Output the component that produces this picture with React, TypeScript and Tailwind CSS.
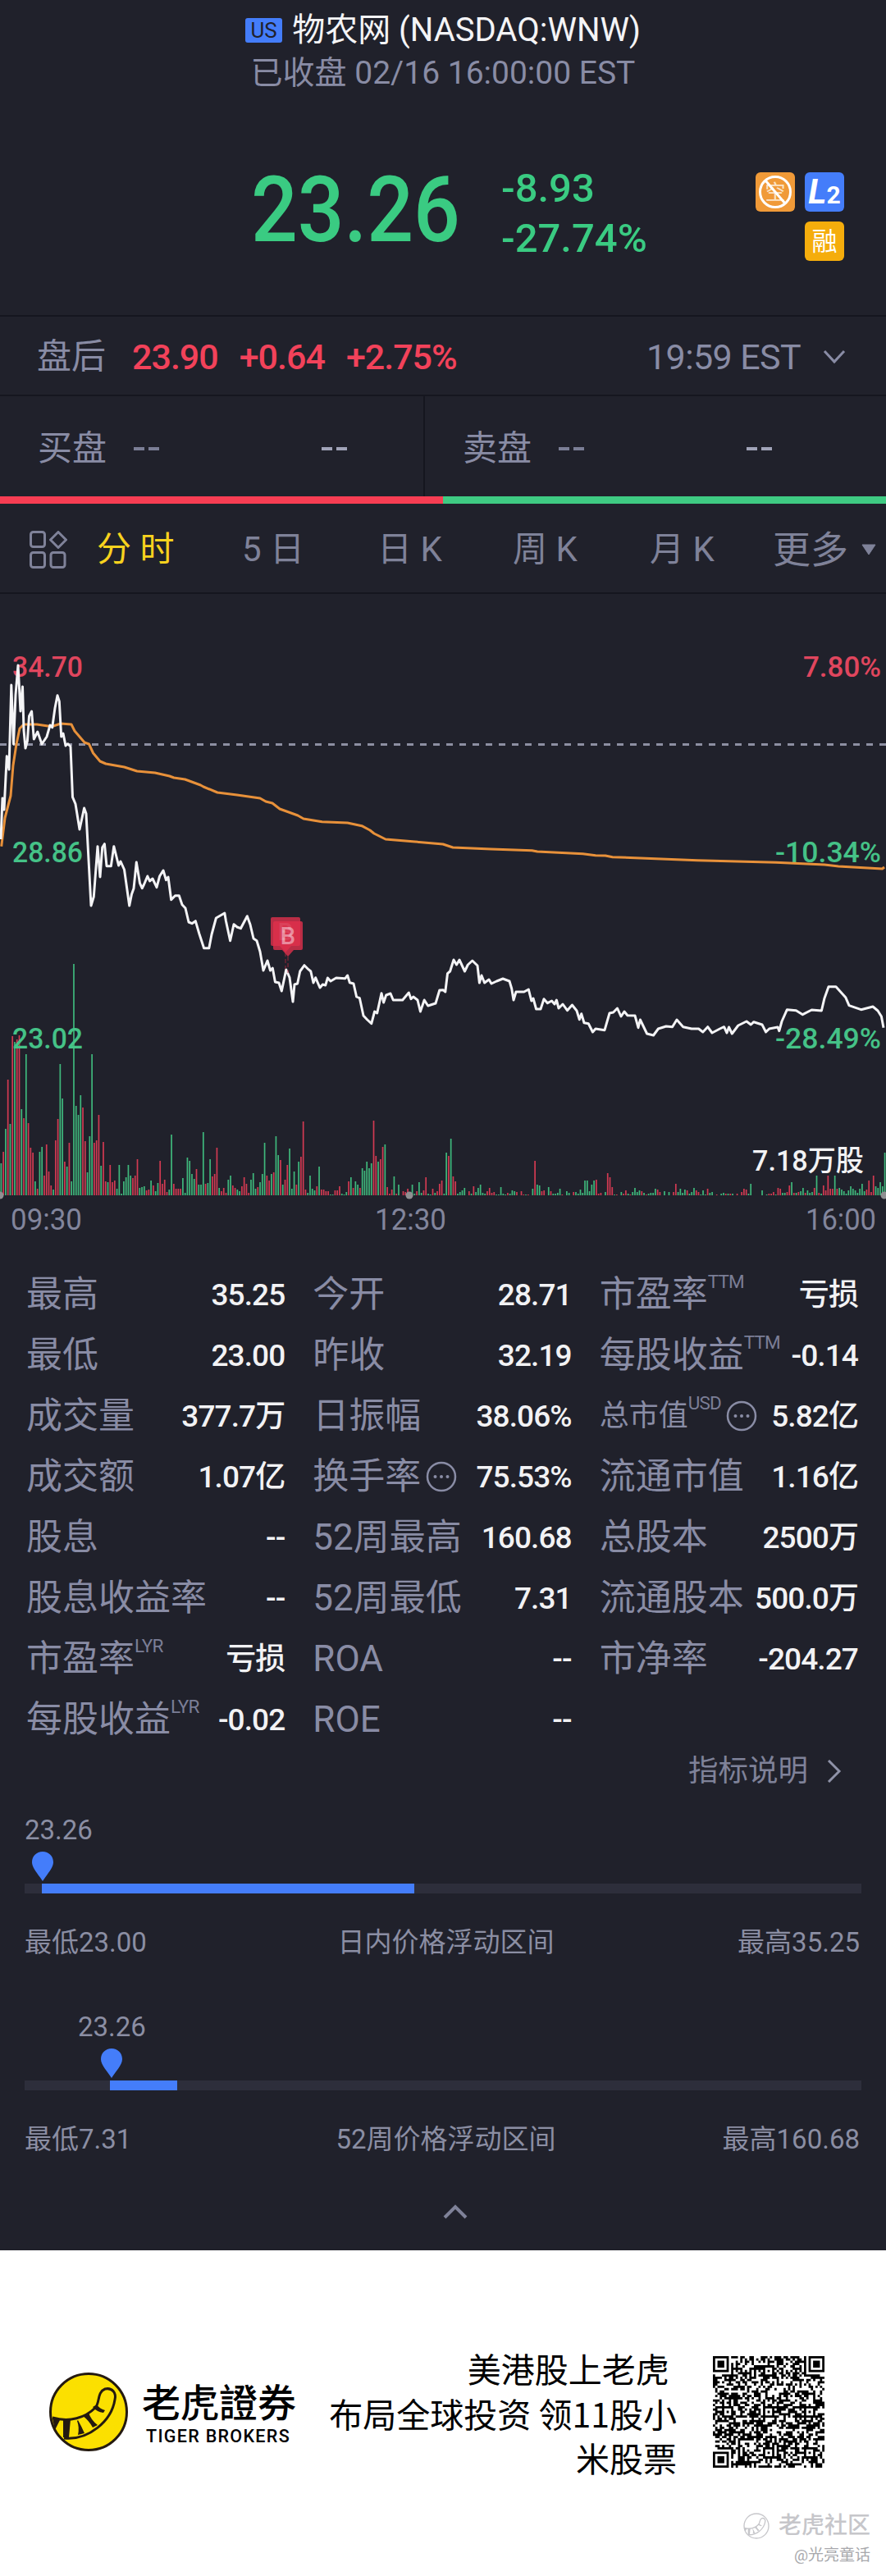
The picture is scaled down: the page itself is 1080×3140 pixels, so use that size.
import React from "react";

const AVERAGE_LINE =
  "1.7,1031.7 6,997 13,970 16,933 20,907 24,888 29,883 45,883 58.5,885 65,885 74,882 87,883 91,891 103,905 108.5,907 113.6,918 122,928 129,931 151.5,935 167,940 189,942 206.6,946 212,948 225.5,950 244.5,957 248,959 265,966 289,969 317,973 324,977 332,979 341,986 363,994 370,998 392.6,1001.7 423.6,1003 441,1006.7 451,1012 456,1016 470,1023 506,1026 540,1029 552,1033 598.5,1035 648.5,1036.7 655,1038 710.5,1040.7 726,1042.7 738,1043 746.6,1044.7 850,1048.7 946,1051.3 1005,1054 1022,1056 1075.5,1059 1078,1057";

const PRICE_LINE =
  "1,1023 3,973 5,987 7,947 8.3,921.7 11,938 13.8,835 16.5,907 19,847 22,811 25,867 27.5,837 29,890 31,912 33.4,903 35.5,873 38.6,867 41.3,901 45.8,892 51,907 57,898 61,884 63.7,886.7 67,863 70,847.7 72.3,855 74.7,898 77,894 80,909 82.6,906.7 86,910 88.5,971.7 92,980 97,1011 102.6,985 105,991.7 111,1104 114.3,1093 119,1031.7 122,1069 124.7,1033 127.4,1028.7 130,1055.7 135.3,1055.7 138.8,1031.7 144.6,1055 147,1050 151.5,1060 157.7,1104 160.5,1090 163,1083 166.3,1051 170.5,1076.7 173.2,1082.7 175.6,1078 179.8,1068 182.5,1074 186,1071 191,1081.7 194.6,1068 199,1061 202.5,1072.7 205,1069 208.7,1096.7 213.5,1091.7 218.3,1091.7 222,1102.7 226,1107 230,1124 234,1125.7 238.3,1122.7 242.8,1138 248.6,1155.7 254.8,1155.7 258,1139 263.4,1119 273.8,1113 275.5,1123 280.6,1146.7 285,1126.7 289,1130 293.4,1131.7 301.3,1116.7 305,1127 309,1144 313,1146.7 317,1160 321,1183 326,1171 329.5,1183 332.3,1180 335.4,1197 340,1198 343.3,1208 348.8,1182 353,1191.7 357,1221 359,1200 362.6,1199 365.7,1184 371,1176.7 376,1181.7 378.8,1184 382,1198 384.6,1191.7 390,1204 393.3,1200 396.7,1201 399.4,1192 403,1196 409.8,1192 420.8,1192.7 423.6,1189 426.3,1197.7 431,1199 434.6,1215 438.4,1216.7 443,1238 447.7,1243 452.8,1247.7 456.6,1233 459.7,1235 465,1210.7 467.6,1222 470.7,1213 476,1211 479.3,1219 490.7,1219 498.3,1210 501,1217.7 503.8,1215 509,1219 512.4,1233 517.2,1219 521.7,1226 531,1223 535.8,1207 540,1206.7 542.8,1209 545.5,1186.7 548.6,1184 553,1170 556.5,1176 560,1170 566.5,1184 570.3,1176 575.8,1171 582,1177 584.4,1198 587,1189 590.6,1198 596,1194 599,1199 605.4,1196 613,1193 621,1196 623.7,1205 626,1219 629,1209 638.8,1209 644.3,1206 647.8,1220 650,1217 653.6,1230 659,1230 663,1217.7 667.4,1222.7 672.6,1220 676,1224 678.4,1219 681,1229 686,1224 691.5,1231.7 697.4,1225 703,1232 706.3,1242.7 708.7,1235.7 712,1246.7 717.3,1247.7 722.5,1258 726,1254 737,1255.7 743,1235 747.6,1234 752.5,1229 757,1239 761,1233 764.9,1237.7 774,1238 778,1252.7 780.4,1243 788.6,1260 796.5,1262 802.4,1254 812,1251 819.6,1251.7 825,1243 832.7,1251.7 843,1254 851.6,1254 856.8,1258 862.7,1251.7 868,1259 877.5,1254 882.6,1251.7 886,1259 888.5,1252 892.3,1260 899.8,1250 910,1245 915.3,1249 918.8,1245.7 929,1249 933.6,1258 937.7,1254 948,1252 949.8,1256.7 953,1245 959.4,1230.7 970.4,1231.7 978.4,1236.7 989.4,1231 1001.4,1232 1005,1216.7 1010,1202.7 1019,1202.7 1030.7,1215.7 1035,1225.7 1049.6,1230.7 1064,1227 1070,1232 1074.4,1239 1077,1252.7";

// one entry per minute, r = up, g = down
const VOLUMES =
  "g39 r53 g81 r141 g87 r194 g187 r190 r195 g105 r94 g172 r88 r58 r52 g17 r8 g53 g59 r24 r62 r29 r12 g7 r67 r93 g160 g118 r41 g35 r64 g17 g282 g109 g98 g122 r107 r66 g28 g72 g172 r64 r67 r98 g36 r65 r17 g16 r37 r16 r18 g8 g37 g2 g17 g22 g37 g24 r21 r24 r44 g9 g10 g11 r6 r7 g18 r12 g5 g15 r42 r14 r19 r4 g7 g74 r14 r8 r8 r8 g21 g3 g46 g42 g26 g20 r32 g13 g13 g77 r14 g15 g44 r23 r26 r58 g9 r5 r9 r3 g19 g24 r12 r9 g7 g5 r11 r22 r14 r3 g19 g27 g8 r10 g16 g26 g64 r24 r18 g26 r28 g72 g49 r43 g13 r19 r37 g57 g8 g29 r13 g41 r47 r90 r7 g3 g24 g8 g6 r11 g35 r7 r7 r5 r5 g1 g1 r6 r6 r11 g2 g1 g4 r17 g22 r9 g17 g13 r9 g33 g30 g41 g33 g39 r91 r48 g41 r44 r59 g62 r10 r2 r7 g23 r2 g13 g0 r5 r4 r8 r3 g13 g2 r5 g16 g3 r6 r22 g2 g1 r8 g3 r5 r14 r18 g2 g52 r48 g69 r23 r17 g2 g4 g6 g9 g0 r5 g2 r11 g4 g9 g13 g3 g2 r5 r9 r3 r4 g1 g1 g10 g2 g1 r3 g2 g6 g5 r4 g0 r5 r1 g1 r1 g0 g8 r42 g13 g12 r5 r6 g0 g10 r5 g2 g2 g3 g8 r1 g0 g5 g3 g0 r4 g4 g2 g7 g3 g18 g18 g5 g13 g18 r19 r2 r3 g0 g4 r27 r22 r10 g1 r1 g0 g4 r2 r6 g2 r1 g4 g9 g4 g6 r5 g3 r1 g2 g3 g3 g8 r7 r4 g0 g5 g0 g4 g0 r4 r14 g4 g8 g3 g7 r6 g2 g4 g9 r6 r4 g1 g6 g1 r8 g3 g4 g0 r1 g0 g2 g3 r2 g2 r2 g2 g0 r2 g0 r4 r8 r7 g2 g14 g0 g0 g0 g0 g6 g0 g1 r2 r2 r4 g1 r9 r8 g3 g3 r4 r12 g16 r3 g3 r4 g5 g9 r3 g6 g3 g4 r9 g24 r3 g2 r12 r6 r24 r8 r8 g24 r8 g9 g7 g5 g2 g6 g11 g8 g6 g3 g8 g14 g5 r7 r18 r4 r24 g11 g9 g16 g11 g52".split(
    " "
  );

const TABS = [
  { label: "分 时", className: "w-[177px] text-[#f7d21e]" },
  { label: "5 日", className: "w-[165px]" },
  { label: "日 K", className: "w-[165px]" },
  { label: "周 K", className: "w-[167px]" },
  { label: "月 K", className: "w-[150px]" },
];

type Stat = {
  label: string;
  value: string;
  sup?: string;
  info?: boolean;
  small?: boolean;
};

const STATS: (Stat | null)[] = [
  { label: "最高", value: "35.25" },
  { label: "今开", value: "28.71" },
  { label: "市盈率", sup: "TTM", value: "亏损" },
  { label: "最低", value: "23.00" },
  { label: "昨收", value: "32.19" },
  { label: "每股收益", sup: "TTM", value: "-0.14" },
  { label: "成交量", value: "377.7万" },
  { label: "日振幅", value: "38.06%" },
  { label: "总市值", sup: "USD", info: true, small: true, value: "5.82亿" },
  { label: "成交额", value: "1.07亿" },
  { label: "换手率", info: true, value: "75.53%" },
  { label: "流通市值", value: "1.16亿" },
  { label: "股息", value: "--" },
  { label: "52周最高", value: "160.68" },
  { label: "总股本", value: "2500万" },
  { label: "股息收益率", value: "--" },
  { label: "52周最低", value: "7.31" },
  { label: "流通股本", value: "500.0万" },
  { label: "市盈率", sup: "LYR", value: "亏损" },
  { label: "ROA", value: "--" },
  { label: "市净率", value: "-204.27" },
  { label: "每股收益", sup: "LYR", value: "-0.02" },
  { label: "ROE", value: "--" },
  null,
];

function Header() {
  return (
    <div className="h-[384px] pt-[10px]">
      <div className="flex h-[53px] items-center justify-center text-[40px] leading-none text-[#f4f4f6]">
        <span className="mr-[12px] flex h-[30px] w-[45px] items-center justify-center rounded-[3px] bg-[#447dfa] text-[26px] text-[#20212c]">
          US
        </span>
        物农网 (NASDAQ:WNW)
      </div>
      <div className="flex h-[53px] items-center justify-center text-[39px] leading-none text-[#898ca5]">
        已收盘 02/16 16:00:00 EST
      </div>
      <div className="mt-[82px] flex h-[123px] pl-[306px] pr-[51px] text-[#3acb82]">
        <div className="w-[305px]">
          <div className="origin-left scale-x-90 text-[111px] font-medium leading-[117px]">
            23.26
          </div>
        </div>
        <div className="pt-[1px] text-[49px] font-medium leading-[61px]">
          <div>-8.93</div>
          <div>-27.74%</div>
        </div>
        <div className="ml-auto mt-[12px] grid h-[108px] grid-cols-2 gap-[12px] leading-none text-white">
          <div className="size-[48px] rounded-[6px] bg-[#f09a38]">
            <svg viewBox="0 0 48 48" className="size-full">
              <text x="24" y="33" textAnchor="middle" fontSize="25" fill="#fbe3c5">
                空
              </text>
              <circle cx="24" cy="24" r="18.5" fill="none" stroke="#fff" strokeWidth="3" />
              <path d="M12 10 36 38" stroke="#fff" strokeWidth="3" />
            </svg>
          </div>
          <div className="flex size-[48px] items-baseline justify-center rounded-[6px] bg-[#447dfa] pt-[2px] font-bold">
            <span className="text-[42px] italic leading-[44px]">L</span>
            <span className="text-[30px]">2</span>
          </div>
          <div className="col-start-2 flex size-[48px] items-center justify-center rounded-[6px] bg-[#f5ad0c] text-[31px]">
            融
          </div>
        </div>
      </div>
    </div>
  );
}

function AfterHours() {
  return (
    <div className="flex h-[99px] items-center border-y-2 border-[#15161f] pl-[45px] pr-[49px] pt-[3px] text-[42px] leading-none text-[#898ca5]">
      <span className="mr-[32px]">盘后</span>
      <div className="flex gap-[26px] text-[43px] font-medium tracking-[-1px] text-[#f2425a]">
        <span>23.90</span>
        <span>+0.64</span>
        <span>+2.75%</span>
      </div>
      <span className="ml-auto text-[43px] tracking-[-0.6px]">19:59 EST</span>
      <svg viewBox="0 0 28 18" className="ml-[27px] h-[18px] w-[28px]">
        <path d="M2 2 14 15 26 2" fill="none" stroke="#898ca5" strokeWidth="3" />
      </svg>
    </div>
  );
}

function Quote({ label, className }: { label: string; className: string }) {
  return (
    <div className={`flex items-center pl-[46px] pt-[5px] ${className}`}>
      <span className="w-[117px]">{label}</span>
      <span className="flex w-[229px] gap-[5px]">
        <i className="h-[4px] w-[13px] bg-[#7b7e96]" />
        <i className="h-[4px] w-[13px] bg-[#7b7e96]" />
      </span>
      <span className="flex gap-[5px]">
        <i className="h-[4px] w-[13px] bg-[#a0a3b8]" />
        <i className="h-[4px] w-[13px] bg-[#a0a3b8]" />
      </span>
    </div>
  );
}

function Tabs() {
  return (
    <div className="flex h-[110px] items-center border-b-2 border-[#15161f] pl-[36px] pt-[3px] text-[42px] leading-none text-[#7f8299]">
      <svg
        viewBox="0 0 46 46"
        className="mr-[36px] size-[46px]"
        fill="none"
        stroke="#7f8299"
        strokeWidth="3"
      >
        <rect x="1.5" y="1.5" width="17" height="18" rx="3" />
        <rect x="1.5" y="26.5" width="17" height="18" rx="3" />
        <rect x="26" y="26.5" width="17" height="18" rx="3" />
        <path d="M35 1.5 44.5 11 35 20.5 25.5 11Z" strokeLinejoin="round" />
      </svg>
      {TABS.map((tab) => (
        <span key={tab.label} className={tab.className}>
          {tab.label}
        </span>
      ))}
      <span className="text-[46px]">更多</span>
      <svg viewBox="0 0 18 14" className="ml-[16px] h-[14px] w-[18px]">
        <path d="M1 1H17L9 13Z" fill="#7f8299" stroke="#7f8299" strokeLinejoin="round" />
      </svg>
    </div>
  );
}

function Marker({ x, y }: { x: number; y: number }) {
  return (
    <g opacity="0.8">
      <path
        d={`M${x + 2} ${y}h32a2 2 0 0 1 2 2v31a2 2 0 0 1-2 2h-9l-7 8-7-8h-9a2 2 0 0 1-2-2v-31a2 2 0 0 1 2-2z`}
        fill="#e0304c"
      />
      <text x={x + 18} y={y + 28} textAnchor="middle" fontSize="29" fontWeight="500" fill="#f5a3b3">
        B
      </text>
      <path d={`M${x + 18} ${y + 43}v20`} stroke="#b3283e" strokeDasharray="5 3" />
    </g>
  );
}

type LabelProps = { x: number; y: number; width: number; fill?: string; children: string };

function ChartLabel({ x, y, width, fill, children }: LabelProps) {
  return (
    <text x={x} y={y} textLength={width} lengthAdjust="spacingAndGlyphs" fill={fill}>
      {children}
    </text>
  );
}

function Chart() {
  const step = 1080 / 390;
  return (
    <svg viewBox="0 724 1080 796" className="block h-[796px] w-full">
      {VOLUMES.map((item, i) => {
        const h = Number(item.slice(1));
        return (
          <rect
            key={i}
            x={i * step + 0.5}
            y={1457 - h}
            width="1.7"
            height={h}
            fill={item[0] === "r" ? "#d23a52" : "#3fb87c"}
          />
        );
      })}
      <path d="M0 907.5H1080" stroke="#8d8fa2" strokeWidth="3" strokeDasharray="8 8" />
      <g fill="#8f9092">
        <circle cx="0" cy="1457" r="4.5" />
        <circle cx="499" cy="1457" r="4.5" />
        <circle cx="1078" cy="1457" r="4.5" />
      </g>
      <g fontSize="35" fontWeight="500" fill="#45c287">
        <ChartLabel x={15} y={825} width={86} fill="#e0465e">34.70</ChartLabel>
        <ChartLabel x={15} y={1051} width={86}>28.86</ChartLabel>
        <ChartLabel x={15} y={1278} width={86}>23.02</ChartLabel>
        <ChartLabel x={979} y={825} width={95} fill="#e0465e">7.80%</ChartLabel>
        <ChartLabel x={945} y={1051} width={129}>-10.34%</ChartLabel>
        <ChartLabel x={945} y={1278} width={129}>-28.49%</ChartLabel>
        <ChartLabel x={917} y={1427} width={136} fill="#f2f2f4">7.18万股</ChartLabel>
      </g>
      <g fontSize="36" fill="#82859c">
        <ChartLabel x={13} y={1499} width={87}>09:30</ChartLabel>
        <ChartLabel x={457} y={1499} width={87}>12:30</ChartLabel>
        <ChartLabel x={982} y={1499} width={86}>16:00</ChartLabel>
      </g>
      <g fill="none" strokeWidth="3" strokeLinejoin="round">
        <polyline points={AVERAGE_LINE} stroke="#e8913a" />
        <polyline points={PRICE_LINE} stroke="#f4f4f6" />
      </g>
      <Marker x={330} y={1118} />
      <Marker x={333} y={1123} />
    </svg>
  );
}

function InfoIcon() {
  return (
    <svg viewBox="0 0 38 38" className="ml-[6px] size-[38px]" fill="#898ca5">
      <circle cx="19" cy="19" r="17" fill="none" stroke="#898ca5" strokeWidth="2.5" />
      <circle cx="11.5" cy="19" r="2" />
      <circle cx="19" cy="19" r="2" />
      <circle cx="26.5" cy="19" r="2" />
    </svg>
  );
}

function Stats() {
  return (
    <div className="grid grid-cols-3 gap-x-[34px] pl-[32px] pr-[34px] pt-[21px] leading-none">
      {STATS.map((stat, i) =>
        stat ? (
          <div key={i} className="flex h-[74px] items-center justify-between whitespace-nowrap">
            <div
              className={`flex items-center text-[#898ca5] ${
                stat.small ? "text-[36px]" : "text-[44px]"
              }`}
            >
              {stat.label}
              {stat.sup && (
                <span className="mb-[32px] text-[22.5px] tracking-[-0.8px] text-[#7b7e96]">
                  {stat.sup}
                </span>
              )}
              {stat.info && <InfoIcon />}
            </div>
            <div className="text-[37px] font-medium tracking-[-0.9px] text-[#f2f2f4]">
              {stat.value}
            </div>
          </div>
        ) : (
          <div key={i} />
        )
      )}
    </div>
  );
}

type RangeProps = {
  title: string;
  low: string;
  high: string;
  labelClass: string;
  pinClass: string;
  fillClass: string;
};

function PriceRange({ title, low, high, labelClass, pinClass, fillClass }: RangeProps) {
  return (
    <div className="h-[240px] px-[30px] text-[33px] leading-none text-[#8b8ea3]">
      <div className={`flex h-[38px] items-center ${labelClass}`}>23.26</div>
      <svg viewBox="0 0 26 36" className={`mt-[8px] h-[36px] w-[26px] ${pinClass}`}>
        <path
          d="M13 0C5.5 0 0 5.5 0 13c0 7 8 15 13 23 5-8 13-16 13-23C26 5.500 20.500 0 13 0Z"
          fill="#447dfa"
        />
      </svg>
      <div className="mt-[3px] h-[12px] bg-[#2d2e3b]">
        <div className={`h-full bg-[#447dfa] ${fillClass}`} />
      </div>
      <div className="mt-[41px] flex h-[36px] items-center">
        <span className="w-[330px]">{low}</span>
        <span className="flex-1 pl-[5px] text-center">{title}</span>
        <span className="w-[328px] pr-[2px] text-right">{high}</span>
      </div>
    </div>
  );
}

function TailShape() {
  return (
    <>
      <path d="M4 55C25 61 44 55 56 43 62 37 58 24 68 20 77 18 82 25 80 33 76 59 48 83 18 80" />
      <path d="M4 56 14 56 7 70Z" fill="currentColor" stroke="none" />
      <path d="M17 57 26 57 24 79 17 79Z" fill="currentColor" stroke="none" />
      <path d="M35 58Q39 65 43 74L35 76Q37 67 34 59Z" fill="currentColor" stroke="none" />
      <path d="M41 53 48 49Q51 58 59 64L53 67Q48 58 41 53Z" fill="currentColor" stroke="none" />
      <path d="M53 42 58 39Q61 44 68 46L66 49Q58 48 53 42Z" fill="currentColor" stroke="none" />
    </>
  );
}

const QR_SIZE = 49;

function finder(x: number, y: number) {
  const d = Math.max(Math.abs(x - 3), Math.abs(y - 3));
  return d > 4 ? null : d === 3 || d < 2;
}

function isDark(x: number, y: number) {
  const corner = finder(x, y) ?? finder(QR_SIZE - 1 - x, y) ?? finder(x, QR_SIZE - 1 - y);
  if (corner !== null) return corner;
  for (const cx of [6, 24, 42]) {
    for (const cy of [6, 24, 42]) {
      const d = Math.max(Math.abs(x - cx), Math.abs(y - cy));
      if (d < 3) return d !== 1;
    }
  }
  if (x === 6 || y === 6) return (x + y) % 2 === 0;
  const n = Math.sin(x * 127.1 + y * 311.7) * 43758.5453;
  return n - Math.floor(n) < 0.52;
}

function QrCode() {
  let d = "";
  for (let y = 0; y < QR_SIZE; y++) {
    for (let x = 0; x < QR_SIZE; x++) {
      if (isDark(x, y)) d += `M${x} ${y}h1v1h-1z`;
    }
  }
  return (
    <svg viewBox="0 0 49 49" className="size-[136px]">
      <path d={d} fill="#000" />
    </svg>
  );
}

function Footer() {
  return (
    <div className="h-[397px] bg-white pt-[115px] leading-none text-black">
      <div className="flex h-[164px] items-center pl-[60px] pr-[75px]">
        <svg viewBox="0 0 96 96" className="size-[96px] text-[#241a10]">
          <circle cx="48" cy="48" r="46.500" fill="#fbe000" stroke="currentColor" strokeWidth="3" />
          <g fill="none" stroke="currentColor" strokeWidth="3">
            <TailShape />
          </g>
        </svg>
        <div className="ml-[17px] w-[190px] whitespace-nowrap pt-[6px] font-['Roboto','Noto_Sans_CJK_TC',sans-serif]">
          <div className="text-[47px] font-medium">老虎證券</div>
          <div className="ml-[5px] mt-[6px] text-[21.5px] font-medium tracking-[1.3px]">
            TIGER BROKERS
          </div>
        </div>
        <div className="ml-auto whitespace-pre pt-[2px] text-right font-['Noto_Sans_CJK_SC',sans-serif] text-[41px] leading-[54.500px]">
          <div>{"美港股上老虎 "}</div>
          <div>布局全球投资 领11股小</div>
          <div>米股票</div>
        </div>
        <div className="ml-[44px]">
          <QrCode />
        </div>
      </div>
      <div className="mt-[37px] flex flex-col items-end pr-[19px] text-[#c6c6ca]">
        <div className="flex h-[40px] items-center text-[28px] font-medium">
          <svg viewBox="0 0 96 96" className="mr-[11px] size-[32px]">
            <circle cx="48" cy="48" r="45" fill="none" stroke="currentColor" strokeWidth="4" />
            <g fill="none" stroke="currentColor" strokeWidth="4">
              <TailShape />
            </g>
          </svg>
          老虎社区
        </div>
        <div className="mt-[6px] text-[19px] text-[#a8a8ac]">@光亮童话</div>
      </div>
    </div>
  );
}

export default function App() {
  return (
    <div className="w-[1080px] overflow-hidden bg-[#20212b] font-['Roboto','Noto_Sans_CJK_SC',sans-serif]">
      <Header />
      <AfterHours />
      <div className="flex h-[122px] text-[42px] leading-none text-[#898ca5]">
        <Quote label="买盘" className="w-[518px] border-r-2 border-[#15161f]" />
        <Quote label="卖盘" className="flex-1" />
      </div>
      <div className="flex h-[9px]">
        <div className="w-1/2 bg-[#f73d53]" />
        <div className="w-1/2 bg-[#3fcb83]" />
      </div>
      <Tabs />
      <Chart />
      <Stats />
      <div className="flex h-[52px] items-center justify-end pr-[53px] text-[36.5px] leading-none text-[#7f8299]">
        指标说明
        <svg viewBox="0 0 20 28" className="ml-[22px] h-[28px] w-[20px]">
          <path d="M3 1 16 14 3 27" fill="none" stroke="#8f92a8" strokeWidth="3" />
        </svg>
      </div>
      <div className="pt-[26px]">
        <PriceRange
          title="日内价格浮动区间"
          low="最低23.00"
          high="最高35.25"
          labelClass=""
          pinClass="ml-[9px]"
          fillClass="ml-[21px] w-[454px]"
        />
        <PriceRange
          title="52周价格浮动区间"
          low="最低7.31"
          high="最高160.68"
          labelClass="ml-[65px]"
          pinClass="ml-[93px]"
          fillClass="ml-[104px] w-[82px]"
        />
      </div>
      <div className="flex h-[52px] items-start justify-center pl-[30px]">
        <svg viewBox="0 0 30 18" className="mt-[-4px] h-[18px] w-[30px]">
          <path d="M2 16 15 3 28 16" fill="none" stroke="#7f8299" strokeWidth="4" />
        </svg>
      </div>
      <Footer />
    </div>
  );
}
